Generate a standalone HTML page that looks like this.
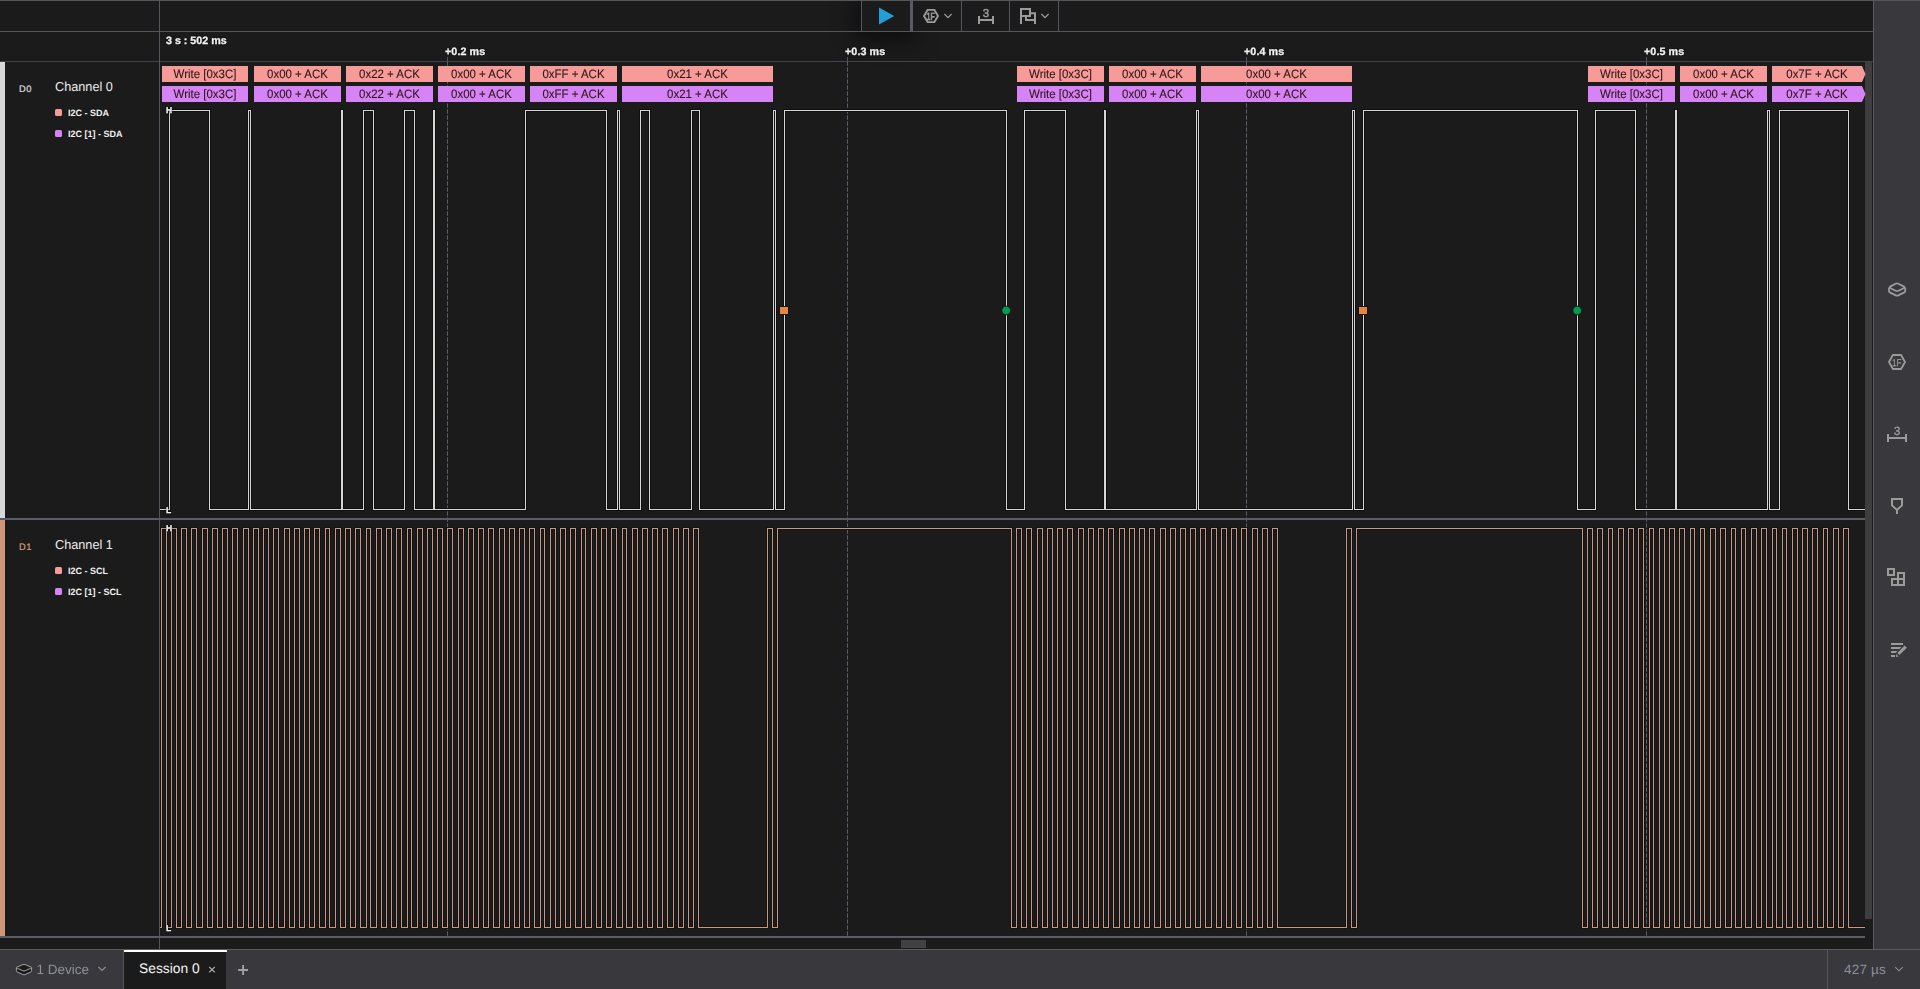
<!DOCTYPE html>
<html><head><meta charset="utf-8"><title>Logic 2</title>
<style>
*{box-sizing:border-box;margin:0;padding:0}
html,body{width:1920px;height:989px;overflow:hidden;background:#1b1b1b;font-family:"Liberation Sans",sans-serif;color:#e4e4e4;text-rendering:geometricPrecision}
#app{position:relative;width:1920px;height:989px;overflow:hidden;background:#1b1b1b}
.abs{position:absolute}
svg,.bx,.rl,.hlb,.gs{will-change:transform}
.hl{position:absolute;background:#55565b}
.bx{position:absolute;height:16px;line-height:16px;font-size:12.2px;color:#301519;-webkit-text-stroke:.1px #301519;text-align:center;white-space:nowrap;overflow:hidden;z-index:3}
.bx span{display:block;transform:scaleX(.94);transform-origin:50% 50%}
.bx.arrow{clip-path:polygon(0 0,90px 0,100% 50%,90px 100%,0 100%)}
.tick{position:absolute;top:57px;height:4px;width:1px;background:#53545d;z-index:1}
.dash{position:absolute;top:61px;height:876px;width:1px;z-index:1;background:repeating-linear-gradient(to bottom,rgba(92,93,104,.65) 0,rgba(92,93,104,.65) 1px,rgba(92,93,104,1) 1px,rgba(92,93,104,1) 4px,rgba(92,93,104,.75) 4px,rgba(92,93,104,.75) 5px,rgba(92,93,104,0) 5px,rgba(92,93,104,0) 6px)}
.rl{position:absolute;font-size:10.7px;font-weight:bold;color:#f2f2f2;-webkit-text-stroke:.3px #f2f2f2;text-shadow:0 0 2px #000;line-height:12px;white-space:nowrap;letter-spacing:.1px}
.lab{position:absolute;white-space:nowrap}
.sq{position:absolute;width:7px;height:7px;border-radius:1.5px}
.an{position:absolute;font-size:9.2px;font-weight:bold;color:#f0f0f0;line-height:11px;white-space:nowrap;transform:scaleX(.98);transform-origin:0 50%}
.hlb{position:absolute;font-size:8.5px;font-weight:bold;color:#f4f4f4;-webkit-text-stroke:.3px #f4f4f4;line-height:8px;z-index:4;text-shadow:0 0 2px #000,0 0 1px #000}
</style></head><body><div id="app">

<!-- top toolbar -->
<div class="abs" style="left:0;top:0;width:1873px;height:32px;background:#1b1b1b"></div>
<div class="abs" id="playbtn" style="left:862px;top:1px;width:48px;height:30px;background:#1b1b1b;box-shadow:0 2px 22px 6px rgba(0,0,0,.55)"></div>
<div class="abs" style="left:913px;top:1px;width:960px;height:30px;background:#1b1b1b"></div>
<div class="hl" style="left:0;top:0;width:1920px;height:1px"></div>
<div class="hl" style="left:0;top:31px;width:1873px;height:1px"></div>
<div class="hl" style="left:861px;top:0;width:1px;height:32px"></div>
<div class="hl" style="left:910px;top:0;width:3px;height:32px;background:#5a5b62"></div>
<div class="hl" style="left:961px;top:0;width:1px;height:32px"></div>
<div class="hl" style="left:1009px;top:0;width:1px;height:32px"></div>
<div class="hl" style="left:1058px;top:0;width:1px;height:32px"></div>
<svg class="abs" style="left:862px;top:0" width="200" height="32" viewBox="862 0 200 32">
 <polygon points="879,7.6 894.2,16 879,24.4" fill="#229fd9"/>
 <g fill="none" stroke="#9b9b9b" stroke-width="1.9">
  <polygon points="924,16 927.6,9.9 934.4,9.9 938,16 934.4,22.1 927.6,22.1"/>
 </g>
 <text transform="translate(930.7 19.9) scale(.66 1)" font-family="Liberation Sans, sans-serif" font-size="10.7" font-weight="bold" fill="#9b9b9b" stroke="#9b9b9b" stroke-width=".35" text-anchor="middle">1F</text>
 <polyline points="944.4,14 948,17.6 951.6,14" fill="none" stroke="#9b9b9b" stroke-width="1.2"/>
 <g fill="#9b9b9b">
  <rect x="978" y="16" width="2" height="8"/><rect x="992" y="16" width="2" height="8"/><rect x="978" y="19" width="16" height="2"/>
 </g>
 <text x="986" y="16.6" font-family="Liberation Sans, sans-serif" font-size="11.5" fill="#9b9b9b" text-anchor="middle" stroke="#9b9b9b" stroke-width=".5">3</text>
 <g fill="none" stroke="#9b9b9b" stroke-width="2">
  <path d="M1021 24V9H1030V16H1021"/>
  <path d="M1030 13.3H1035V24M1035 20H1026V17"/>
 </g>
 <polyline points="1041.4,14 1045,17.6 1048.6,14" fill="none" stroke="#9b9b9b" stroke-width="1.2"/>
</svg>

<!-- ruler -->
<div class="hl" style="left:0;top:61px;width:1873px;height:1px;background:#424349"></div>
<div class="rl" style="left:166px;top:34.8px;letter-spacing:0">3 s : 502 ms</div>
<div class="rl" style="left:445px;top:45.9px">+0.2 ms</div>
<div class="rl" style="left:845px;top:45.9px">+0.3 ms</div>
<div class="rl" style="left:1244.4px;top:45.9px">+0.4 ms</div>
<div class="rl" style="left:1644.2px;top:45.9px">+0.5 ms</div>


<!-- left label column -->
<div class="abs" style="left:0;top:62px;width:5px;height:456px;background:#d8d8d8"></div>
<div class="abs" style="left:0;top:520px;width:5px;height:416px;background:#ce9779"></div>
<div class="lab" style="left:19.1px;top:83px;font-size:9.4px;line-height:11px;color:#dcdcdc;-webkit-text-stroke:.2px #dcdcdc;letter-spacing:.5px">D0</div>
<div class="lab" style="left:54.5px;top:79.2px;font-size:13px;line-height:15px;color:#ededed;transform:scaleX(.977);transform-origin:0 50%">Channel 0</div>
<div class="sq" style="left:55px;top:109px;background:#f69b98"></div>
<div class="an" style="left:68px;top:108px">I2C - SDA</div>
<div class="sq" style="left:55px;top:130px;background:#d683f6"></div>
<div class="an" style="left:68px;top:129px">I2C [1] - SDA</div>

<div class="lab" style="left:19.1px;top:541px;font-size:9.4px;line-height:11px;color:#d79b72;-webkit-text-stroke:.2px #d79b72;letter-spacing:.5px">D1</div>
<div class="lab" style="left:54.5px;top:537.2px;font-size:13px;line-height:15px;color:#ededed;transform:scaleX(.977);transform-origin:0 50%">Channel 1</div>
<div class="sq" style="left:55px;top:567px;background:#f69b98"></div>
<div class="an" style="left:68px;top:566px">I2C - SCL</div>
<div class="sq" style="left:55px;top:588px;background:#d683f6"></div>
<div class="an" style="left:68px;top:587px">I2C [1] - SCL</div>

<div class="hl" style="left:159px;top:0;width:1px;height:949px"></div>

<!-- dashed time markers -->
<div class="tick" style="left:447px"></div><div class="dash" style="left:447px"></div>
<div class="tick" style="left:847px"></div><div class="dash" style="left:847px"></div>
<div class="tick" style="left:1246px"></div><div class="dash" style="left:1246px"></div>
<div class="tick" style="left:1646px"></div><div class="dash" style="left:1646px"></div>


<!-- annotation boxes -->
<div class="bx" style="left:162px;top:66px;width:86px;background:#f69b98"><span>Write [0x3C]</span></div>
<div class="bx" style="left:254px;top:66px;width:87px;background:#f69b98"><span>0x00 + ACK</span></div>
<div class="bx" style="left:346px;top:66px;width:87px;background:#f69b98"><span>0x22 + ACK</span></div>
<div class="bx" style="left:438px;top:66px;width:87px;background:#f69b98"><span>0x00 + ACK</span></div>
<div class="bx" style="left:530px;top:66px;width:87px;background:#f69b98"><span>0xFF + ACK</span></div>
<div class="bx" style="left:622px;top:66px;width:151px;background:#f69b98"><span>0x21 + ACK</span></div>
<div class="bx" style="left:1017px;top:66px;width:87px;background:#f69b98"><span>Write [0x3C]</span></div>
<div class="bx" style="left:1109px;top:66px;width:87px;background:#f69b98"><span>0x00 + ACK</span></div>
<div class="bx" style="left:1201px;top:66px;width:151px;background:#f69b98"><span>0x00 + ACK</span></div>
<div class="bx" style="left:1588px;top:66px;width:87px;background:#f69b98"><span>Write [0x3C]</span></div>
<div class="bx" style="left:1680px;top:66px;width:87px;background:#f69b98"><span>0x00 + ACK</span></div>
<div class="bx arrow" style="left:1772px;top:66px;width:93.5px;background:#f69b98"><span style="width:90px">0x7F + ACK</span></div>
<div class="bx" style="left:162px;top:86px;width:86px;background:#d683f6"><span>Write [0x3C]</span></div>
<div class="bx" style="left:254px;top:86px;width:87px;background:#d683f6"><span>0x00 + ACK</span></div>
<div class="bx" style="left:346px;top:86px;width:87px;background:#d683f6"><span>0x22 + ACK</span></div>
<div class="bx" style="left:438px;top:86px;width:87px;background:#d683f6"><span>0x00 + ACK</span></div>
<div class="bx" style="left:530px;top:86px;width:87px;background:#d683f6"><span>0xFF + ACK</span></div>
<div class="bx" style="left:622px;top:86px;width:151px;background:#d683f6"><span>0x21 + ACK</span></div>
<div class="bx" style="left:1017px;top:86px;width:87px;background:#d683f6"><span>Write [0x3C]</span></div>
<div class="bx" style="left:1109px;top:86px;width:87px;background:#d683f6"><span>0x00 + ACK</span></div>
<div class="bx" style="left:1201px;top:86px;width:151px;background:#d683f6"><span>0x00 + ACK</span></div>
<div class="bx" style="left:1588px;top:86px;width:87px;background:#d683f6"><span>Write [0x3C]</span></div>
<div class="bx" style="left:1680px;top:86px;width:87px;background:#d683f6"><span>0x00 + ACK</span></div>
<div class="bx arrow" style="left:1772px;top:86px;width:93.5px;background:#d683f6"><span style="width:90px">0x7F + ACK</span></div>


<!-- waveforms -->
<svg class="abs" style="left:160px;top:62px;z-index:2" width="1705" height="875" viewBox="160 62 1705 875">
 <g fill="none" shape-rendering="crispEdges" stroke-linejoin="miter">
  <path d="M160 509.5H169.5V110.5H209.5V509.5H248.5V110.5H250.5V509.5H341.5V110.5H342.5V509.5H363.5V110.5H373.5V509.5H404.5V110.5H414.5V509.5H433.5V110.5H434.5V509.5H525.5V110.5H606.5V509.5H617.5V110.5H619.5V509.5H640.5V110.5H649.5V509.5H691.5V110.5H699.5V509.5H773.5V110.5H775.5V509.5H784.5V110.5H1006.5V509.5H1024.5V110.5H1065.5V509.5H1104.5V110.5H1105.5V509.5H1196.5V110.5H1198.5V509.5H1352.5V110.5H1354.5V509.5H1363.5V110.5H1577.5V509.5H1595.5V110.5H1635.5V509.5H1675.5V110.5H1676.5V509.5H1767.5V110.5H1769.5V509.5H1779.5V110.5H1848.5V509.5H1865" stroke="#101010" stroke-width="3"/>
  <path d="M160 927.5H161.5V528.5H166.5V927.5H171.5V528.5H176.5V927.5H181.5V528.5H186.5V927.5H191.5V528.5H196.5V927.5H202.5V528.5H207.5V927.5H212.5V528.5H217.5V927.5H222.5V528.5H227.5V927.5H232.5V528.5H237.5V927.5H243.5V528.5H248.5V927.5H253.5V528.5H258.5V927.5H263.5V528.5H268.5V927.5H273.5V528.5H278.5V927.5H284.5V528.5H289.5V927.5H294.5V528.5H299.5V927.5H304.5V528.5H309.5V927.5H314.5V528.5H319.5V927.5H325.5V528.5H329.5V927.5H335.5V528.5H340.5V927.5H345.5V528.5H350.5V927.5H355.5V528.5H360.5V927.5H366.5V528.5H370.5V927.5H376.5V528.5H381.5V927.5H386.5V528.5H391.5V927.5H396.5V528.5H401.5V927.5H407.5V528.5H411.5V927.5H417.5V528.5H422.5V927.5H427.5V528.5H432.5V927.5H437.5V528.5H442.5V927.5H447.5V528.5H452.5V927.5H458.5V528.5H463.5V927.5H468.5V528.5H473.5V927.5H478.5V528.5H483.5V927.5H488.5V528.5H493.5V927.5H499.5V528.5H504.5V927.5H509.5V528.5H514.5V927.5H519.5V528.5H524.5V927.5H529.5V528.5H534.5V927.5H540.5V528.5H544.5V927.5H550.5V528.5H555.5V927.5H560.5V528.5H565.5V927.5H570.5V528.5H575.5V927.5H581.5V528.5H585.5V927.5H591.5V528.5H596.5V927.5H601.5V528.5H606.5V927.5H611.5V528.5H616.5V927.5H622.5V528.5H626.5V927.5H632.5V528.5H637.5V927.5H642.5V528.5H647.5V927.5H652.5V528.5H657.5V927.5H662.5V528.5H667.5V927.5H673.5V528.5H678.5V927.5H683.5V528.5H688.5V927.5H693.5V528.5H698.5V927.5H767.5V528.5H772.5V927.5H777.5V528.5H1011.5V927.5H1016.5V528.5H1021.5V927.5H1026.5V528.5H1031.5V927.5H1037.5V528.5H1042.5V927.5H1047.5V528.5H1052.5V927.5H1057.5V528.5H1062.5V927.5H1067.5V528.5H1072.5V927.5H1078.5V528.5H1083.5V927.5H1088.5V528.5H1093.5V927.5H1098.5V528.5H1103.5V927.5H1108.5V528.5H1113.5V927.5H1119.5V528.5H1124.5V927.5H1129.5V528.5H1134.5V927.5H1139.5V528.5H1144.5V927.5H1149.5V528.5H1154.5V927.5H1160.5V528.5H1165.5V927.5H1170.5V528.5H1175.5V927.5H1180.5V528.5H1185.5V927.5H1190.5V528.5H1195.5V927.5H1200.5V528.5H1205.5V927.5H1211.5V528.5H1216.5V927.5H1221.5V528.5H1226.5V927.5H1231.5V528.5H1236.5V927.5H1241.5V528.5H1246.5V927.5H1252.5V528.5H1257.5V927.5H1262.5V528.5H1267.5V927.5H1272.5V528.5H1277.5V927.5H1346.5V528.5H1351.5V927.5H1356.5V528.5H1582.5V927.5H1587.5V528.5H1592.5V927.5H1597.5V528.5H1602.5V927.5H1608.5V528.5H1612.5V927.5H1618.5V528.5H1623.5V927.5H1628.5V528.5H1633.5V927.5H1638.5V528.5H1643.5V927.5H1649.5V528.5H1653.5V927.5H1659.5V528.5H1664.5V927.5H1669.5V528.5H1674.5V927.5H1679.5V528.5H1684.5V927.5H1690.5V528.5H1694.5V927.5H1700.5V528.5H1704.5V927.5H1710.5V528.5H1715.5V927.5H1720.5V528.5H1725.5V927.5H1731.5V528.5H1735.5V927.5H1741.5V528.5H1745.5V927.5H1751.5V528.5H1756.5V927.5H1761.5V528.5H1766.5V927.5H1772.5V528.5H1776.5V927.5H1782.5V528.5H1786.5V927.5H1792.5V528.5H1797.5V927.5H1802.5V528.5H1807.5V927.5H1812.5V528.5H1817.5V927.5H1823.5V528.5H1827.5V927.5H1833.5V528.5H1838.5V927.5H1843.5V528.5H1848.5V927.5H1865" stroke="#121417" stroke-width="3"/>
  <path d="M160 509.5H169.5V110.5H209.5V509.5H248.5V110.5H250.5V509.5H341.5V110.5H342.5V509.5H363.5V110.5H373.5V509.5H404.5V110.5H414.5V509.5H433.5V110.5H434.5V509.5H525.5V110.5H606.5V509.5H617.5V110.5H619.5V509.5H640.5V110.5H649.5V509.5H691.5V110.5H699.5V509.5H773.5V110.5H775.5V509.5H784.5V110.5H1006.5V509.5H1024.5V110.5H1065.5V509.5H1104.5V110.5H1105.5V509.5H1196.5V110.5H1198.5V509.5H1352.5V110.5H1354.5V509.5H1363.5V110.5H1577.5V509.5H1595.5V110.5H1635.5V509.5H1675.5V110.5H1676.5V509.5H1767.5V110.5H1769.5V509.5H1779.5V110.5H1848.5V509.5H1865" stroke="#d6d6d6" stroke-width="1"/>
  <path d="M160 927.5H161.5V528.5H166.5V927.5H171.5V528.5H176.5V927.5H181.5V528.5H186.5V927.5H191.5V528.5H196.5V927.5H202.5V528.5H207.5V927.5H212.5V528.5H217.5V927.5H222.5V528.5H227.5V927.5H232.5V528.5H237.5V927.5H243.5V528.5H248.5V927.5H253.5V528.5H258.5V927.5H263.5V528.5H268.5V927.5H273.5V528.5H278.5V927.5H284.5V528.5H289.5V927.5H294.5V528.5H299.5V927.5H304.5V528.5H309.5V927.5H314.5V528.5H319.5V927.5H325.5V528.5H329.5V927.5H335.5V528.5H340.5V927.5H345.5V528.5H350.5V927.5H355.5V528.5H360.5V927.5H366.5V528.5H370.5V927.5H376.5V528.5H381.5V927.5H386.5V528.5H391.5V927.5H396.5V528.5H401.5V927.5H407.5V528.5H411.5V927.5H417.5V528.5H422.5V927.5H427.5V528.5H432.5V927.5H437.5V528.5H442.5V927.5H447.5V528.5H452.5V927.5H458.5V528.5H463.5V927.5H468.5V528.5H473.5V927.5H478.5V528.5H483.5V927.5H488.5V528.5H493.5V927.5H499.5V528.5H504.5V927.5H509.5V528.5H514.5V927.5H519.5V528.5H524.5V927.5H529.5V528.5H534.5V927.5H540.5V528.5H544.5V927.5H550.5V528.5H555.5V927.5H560.5V528.5H565.5V927.5H570.5V528.5H575.5V927.5H581.5V528.5H585.5V927.5H591.5V528.5H596.5V927.5H601.5V528.5H606.5V927.5H611.5V528.5H616.5V927.5H622.5V528.5H626.5V927.5H632.5V528.5H637.5V927.5H642.5V528.5H647.5V927.5H652.5V528.5H657.5V927.5H662.5V528.5H667.5V927.5H673.5V528.5H678.5V927.5H683.5V528.5H688.5V927.5H693.5V528.5H698.5V927.5H767.5V528.5H772.5V927.5H777.5V528.5H1011.5V927.5H1016.5V528.5H1021.5V927.5H1026.5V528.5H1031.5V927.5H1037.5V528.5H1042.5V927.5H1047.5V528.5H1052.5V927.5H1057.5V528.5H1062.5V927.5H1067.5V528.5H1072.5V927.5H1078.5V528.5H1083.5V927.5H1088.5V528.5H1093.5V927.5H1098.5V528.5H1103.5V927.5H1108.5V528.5H1113.5V927.5H1119.5V528.5H1124.5V927.5H1129.5V528.5H1134.5V927.5H1139.5V528.5H1144.5V927.5H1149.5V528.5H1154.5V927.5H1160.5V528.5H1165.5V927.5H1170.5V528.5H1175.5V927.5H1180.5V528.5H1185.5V927.5H1190.5V528.5H1195.5V927.5H1200.5V528.5H1205.5V927.5H1211.5V528.5H1216.5V927.5H1221.5V528.5H1226.5V927.5H1231.5V528.5H1236.5V927.5H1241.5V528.5H1246.5V927.5H1252.5V528.5H1257.5V927.5H1262.5V528.5H1267.5V927.5H1272.5V528.5H1277.5V927.5H1346.5V528.5H1351.5V927.5H1356.5V528.5H1582.5V927.5H1587.5V528.5H1592.5V927.5H1597.5V528.5H1602.5V927.5H1608.5V528.5H1612.5V927.5H1618.5V528.5H1623.5V927.5H1628.5V528.5H1633.5V927.5H1638.5V528.5H1643.5V927.5H1649.5V528.5H1653.5V927.5H1659.5V528.5H1664.5V927.5H1669.5V528.5H1674.5V927.5H1679.5V528.5H1684.5V927.5H1690.5V528.5H1694.5V927.5H1700.5V528.5H1704.5V927.5H1710.5V528.5H1715.5V927.5H1720.5V528.5H1725.5V927.5H1731.5V528.5H1735.5V927.5H1741.5V528.5H1745.5V927.5H1751.5V528.5H1756.5V927.5H1761.5V528.5H1766.5V927.5H1772.5V528.5H1776.5V927.5H1782.5V528.5H1786.5V927.5H1792.5V528.5H1797.5V927.5H1802.5V528.5H1807.5V927.5H1812.5V528.5H1817.5V927.5H1823.5V528.5H1827.5V927.5H1833.5V528.5H1838.5V927.5H1843.5V528.5H1848.5V927.5H1865" stroke="#c9977b" stroke-width="1"/>
 </g>
 <rect x="779.5" y="306.5" width="9" height="8" fill="#e8853a" stroke="#121417" stroke-width="1"/>
 <rect x="1358.5" y="306.5" width="9" height="8" fill="#e8853a" stroke="#121417" stroke-width="1"/>
 <circle cx="1006.2" cy="310.5" r="4.4" fill="#009a4e" stroke="#121417" stroke-width=".9"/>
 <circle cx="1577.2" cy="310.5" r="4.4" fill="#009a4e" stroke="#121417" stroke-width=".9"/>
</svg>
<div class="hlb" style="left:165.8px;top:105.6px">H</div>
<div class="hlb" style="left:165.8px;top:505.6px">L</div>
<div class="hlb" style="left:165.8px;top:523.6px">H</div>
<div class="hlb" style="left:165.8px;top:923.8px">L</div>

<!-- separators -->
<div class="hl" style="left:0;top:518px;width:1865px;height:2px;background:#5b5c63;z-index:2"></div>
<div class="hl" style="left:0;top:936px;width:1865px;height:2px;background:#5b5c63;z-index:2"></div>
<!-- scrollbars -->
<div class="abs" style="left:1865px;top:62px;width:7px;height:857px;background:#3e3e3f"></div>
<div class="abs" style="left:901px;top:940px;width:25px;height:8px;background:#414143"></div>

<!-- right sidebar -->
<div class="abs" style="left:1873px;top:1px;width:47px;height:949px;background:#39383d"></div>
<div class="hl" style="left:1873px;top:0;width:1px;height:949px;background:#5a5b61"></div>
<svg class="abs" style="left:1874px;top:270px" width="46" height="400" viewBox="1874 270 46 400">
 <g fill="none" stroke="#9b9b9b" stroke-width="1.8" stroke-linejoin="round">
  <path d="M1890.6 286.4L1895.6 283.8Q1897 283.1 1898.4 283.8L1903.6 286.4Q1905.3 287.3 1903.6 288.2L1898.4 290.8Q1897 291.5 1895.6 290.8L1890.6 288.2Q1888.9 287.3 1890.6 286.4Z"/>
  <path d="M1889 287.4V291.3Q1889 292 1889.8 292.4L1895.8 295.4Q1897 296 1898.2 295.4L1904.4 292.4Q1905.2 292 1905.2 291.3V287.4"/>
  <polygon points="1889,362 1892.9,355 1901.1,355 1905,362 1901.1,369 1892.9,369"/>
  <path d="M1892 505.4V499H1902V505.4L1897 510Z" stroke-width="2" stroke-linejoin="miter"/>
  <path d="M1897 510V514" stroke-width="2"/>
 </g>
 <text transform="translate(1896.8 365.6) scale(.82 1)" font-family="Liberation Sans, sans-serif" font-size="10" fill="#9b9b9b" text-anchor="middle" stroke="#9b9b9b" stroke-width=".25">1F</text>
 <g fill="#9b9b9b">
  <rect x="1887" y="434" width="2" height="8"/><rect x="1905" y="434" width="2" height="8"/><rect x="1887" y="437" width="20" height="2"/>
 </g>
 <text x="1897" y="434.7" font-family="Liberation Sans, sans-serif" font-size="12" fill="#9b9b9b" text-anchor="middle" stroke="#9b9b9b" stroke-width=".3">3</text>
 <g fill="none" stroke="#9b9b9b" stroke-width="2">
  <rect x="1888" y="569" width="6" height="6"/>
  <rect x="1898" y="573" width="6" height="6"/>
  <rect x="1892" y="579" width="6" height="6"/>
  <rect x="1898" y="579" width="6" height="6"/>
 </g>
 <g fill="#9b9b9b">
  <rect x="1891" y="643" width="12" height="2"/>
  <polygon points="1891,647 1901.5,647 1899.5,649 1891,649"/>
  <polygon points="1891,651 1897.5,651 1895.5,653 1891,653"/>
  <rect x="1891" y="655" width="4" height="2"/>
  <polygon points="1896.2,657 1896.2,654 1898.6,656.6"/>
  <polygon points="1897.3,652.9 1904.6,645.6 1906.8,647.8 1899.5,655.1"/>
 </g>
</svg>

<!-- bottom bar -->
<div class="abs" style="left:0;top:949px;width:1920px;height:40px;background:#39383d"></div>
<div class="hl" style="left:0;top:949px;width:1920px;height:1px;background:#5a5b61"></div>
<div class="hl" style="left:123px;top:950px;width:1px;height:39px;background:#55565c"></div>
<div class="abs" style="left:124px;top:950px;width:102.4px;height:39px;background:#1b1b1b"></div>
<div class="abs" style="left:124px;top:949.8px;width:103px;height:2.3px;background:#fff"></div>
<div class="lab" style="left:139px;top:961px;font-size:13.8px;line-height:16px;color:#f4f4f4">Session 0</div>
<svg class="abs" style="left:0;top:950px" width="260" height="39" viewBox="0 950 260 39">
 <g fill="#1b1b1b" stroke="#a4a4a6" stroke-width="1" stroke-linejoin="round">
  <path d="M16.4 967.6V970.9Q16.4 971.6 17.2 972L22.8 974.5Q24 975 25.2 974.5L30.8 972Q31.6 971.6 31.6 970.9V967.6Z"/>
  <path d="M17.6 966.9L22.8 964.6Q24 964.1 25.2 964.6L30.4 966.9Q32 967.6 30.4 968.4L25.2 970.7Q24 971.2 22.8 970.7L17.6 968.4Q16 967.6 17.6 966.9Z"/>
 </g>
 <polyline points="98.4,967 102,970.4 105.6,967" fill="none" stroke="#8d9199" stroke-width="1.1"/>
 <path d="M209.2 966.8L214.8 972.4M214.8 966.8L209.2 972.4" stroke="#b9b9b9" stroke-width="1.1" fill="none"/>
 <path d="M238.2 970H248M243.1 965.1V974.9" stroke="#a2a2a2" stroke-width="1.9" fill="none"/>
</svg>
<div class="lab" style="left:36.5px;top:962px;font-size:13.5px;line-height:16px;color:#8b9099">1 Device</div>
<div class="hl" style="left:1827px;top:950px;width:1px;height:39px;background:#55565c"></div>
<div class="lab" style="left:1844px;top:962px;font-size:13.5px;line-height:16px;color:#8b9099;letter-spacing:.2px">427 µs</div>
<svg class="abs" style="left:1890px;top:960px" width="20" height="20" viewBox="1890 960 20 20">
 <polyline points="1895.2,967.2 1899,970.8 1902.8,967.2" fill="none" stroke="#8d9199" stroke-width="1.1"/>
</svg>
</div></body></html>
